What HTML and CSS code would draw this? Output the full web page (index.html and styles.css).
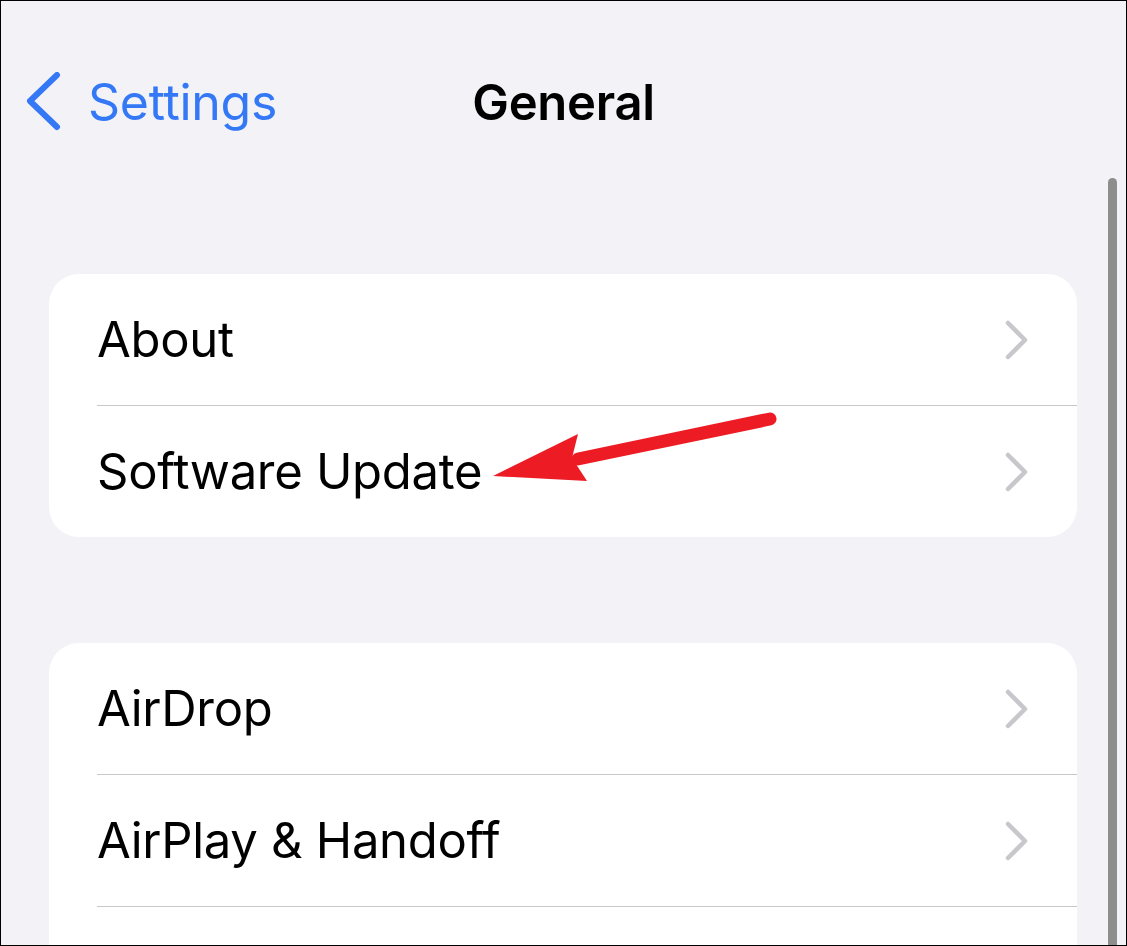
FILE: index.html
```html
<!DOCTYPE html>
<html lang="en">
  <head>
    <meta charset="UTF-8" />
    <meta name="viewport" content="width=device-width, initial-scale=1.0" />
    <title>General</title>
    <link rel="stylesheet" href="styles.css">
  </head>
  <body>
    <div class="screen">
      <header class="nav">
        <a class="back" href="#">
          <svg class="back-icon" width="40" height="60" viewBox="0 0 40 60">
            <path d="M31 3 L4 29 L31 55" fill="none" stroke="#3478f6" stroke-width="6" stroke-linecap="round" stroke-linejoin="round" />
          </svg>
          <span>Settings</span>
        </a>
        <h1 class="title">General</h1>
        <div></div>
      </header>

      <main class="content">
        <ul class="group">
          <li class="row">
            <div class="row-body">
              <span class="label">About</span>
              <svg class="chevron" width="26" height="40" viewBox="0 0 26 40">
                <path d="M3 3 L20 20 L3 37" fill="none" stroke="#c7c7cc" stroke-width="4.5" stroke-linecap="round" stroke-linejoin="round" />
              </svg>
            </div>
          </li>
          <li class="row">
            <div class="row-body">
              <span class="label">Software Update</span>
              <svg class="chevron" width="26" height="40" viewBox="0 0 26 40">
                <path d="M3 3 L20 20 L3 37" fill="none" stroke="#c7c7cc" stroke-width="4.5" stroke-linecap="round" stroke-linejoin="round" />
              </svg>
            </div>
          </li>
        </ul>

        <ul class="group">
          <li class="row">
            <div class="row-body">
              <span class="label">AirDrop</span>
              <svg class="chevron" width="26" height="40" viewBox="0 0 26 40">
                <path d="M3 3 L20 20 L3 37" fill="none" stroke="#c7c7cc" stroke-width="4.5" stroke-linecap="round" stroke-linejoin="round" />
              </svg>
            </div>
          </li>
          <li class="row">
            <div class="row-body">
              <span class="label">AirPlay &amp; Handoff</span>
              <svg class="chevron" width="26" height="40" viewBox="0 0 26 40">
                <path d="M3 3 L20 20 L3 37" fill="none" stroke="#c7c7cc" stroke-width="4.5" stroke-linecap="round" stroke-linejoin="round" />
              </svg>
            </div>
          </li>
          <!-- next row is scrolled below the fold -->
          <li class="row">
            <div class="row-body"></div>
          </li>
        </ul>
      </main>

      <div class="scrollbar"></div>

      <!-- annotation arrow pointing at Software Update -->
      <svg class="arrow" width="1127" height="946" viewBox="0 0 1127 946">
        <line x1="578" y1="459" x2="770" y2="419" stroke="#ed1c24" stroke-width="13" stroke-linecap="round" />
        <polygon points="493,476 578,434 572,458 587,481" fill="#ed1c24" />
      </svg>
    </div>
  </body>
</html>
```

FILE: styles.css
```css
html,
body {
  margin: 0;
  padding: 0;
}

body {
  font-family: Inter, "Liberation Sans", sans-serif;
  color: #000;
}

.screen {
  position: relative;
  width: 1127px;
  height: 946px;
  box-sizing: border-box;
  border: 1px solid #000;
  background: #f2f2f7;
  overflow: hidden;
}

.nav {
  display: grid;
  grid-template-columns: 1fr auto 1fr;
  align-items: center;
  height: 202px;
}

.back {
  display: flex;
  align-items: center;
  gap: 22px;
  padding-left: 25px;
  color: #3478f6;
  text-decoration: none;
  font-size: 50px;
  letter-spacing: -0.3px;
}

.back-icon {
  display: block;
}

.title {
  margin: 0;
  font-size: 49px;
  font-weight: 600;
  letter-spacing: -0.3px;
}

.content {
  padding: 71px 49px 0 48px;
  display: flex;
  flex-direction: column;
  gap: 106px;
}

.group {
  list-style: none;
  margin: 0;
  padding: 0;
  background: #fff;
  border-radius: 30px;
  overflow: hidden;
}

.row {
  padding-left: 48px;
}

.row-body {
  display: flex;
  align-items: center;
  justify-content: space-between;
  height: 131px;
  padding-right: 46px;
  border-bottom: 1px solid #c8c8cc;
}

.row:last-child .row-body {
  border-bottom: none;
}

.label {
  font-size: 49px;
  letter-spacing: -0.3px;
}

.chevron {
  display: block;
}

.scrollbar {
  position: absolute;
  top: 177px;
  left: 1107px;
  width: 9px;
  height: 800px;
  border-radius: 5px 5px 0 0;
  background: #8e8e8e;
}

.arrow {
  position: absolute;
  top: -1px;
  left: -1px;
  pointer-events: none;
}
```
